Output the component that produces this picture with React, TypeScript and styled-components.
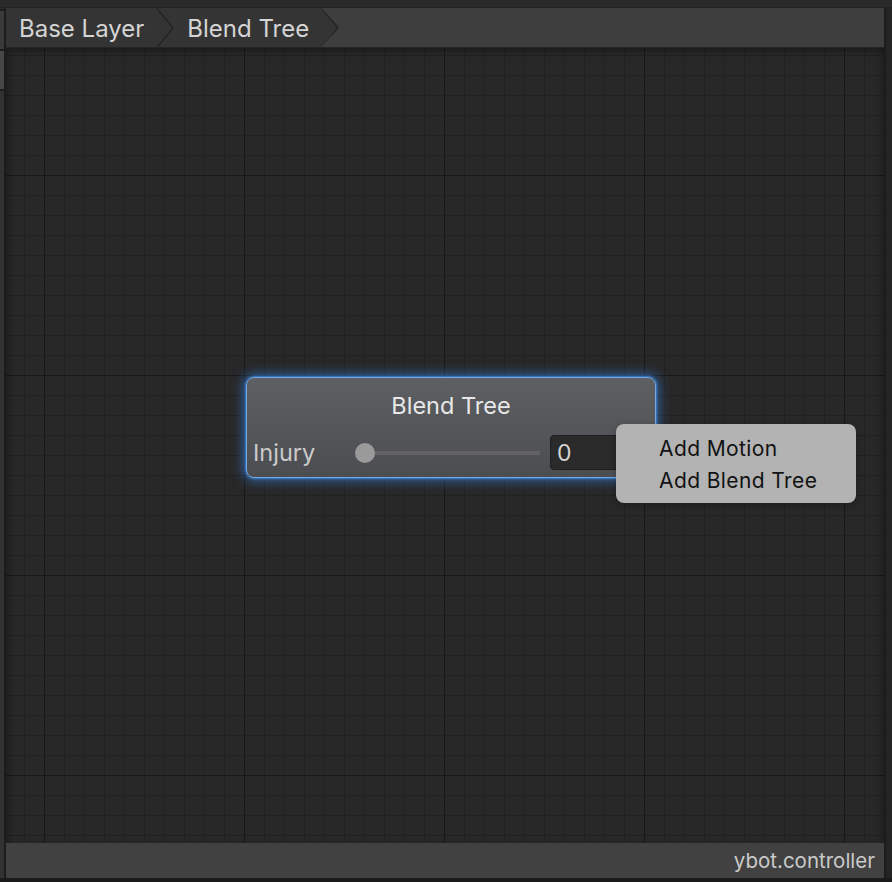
import React, { FC } from 'react';
import styled, { createGlobalStyle } from 'styled-components';

const GlobalStyle = createGlobalStyle`
    html, body {
        margin: 0;
        padding: 0;
        background: #1e1e1e;
    }
    * {
        box-sizing: border-box;
    }
`;

const Window = styled.div`
    width: 892px;
    height: 882px;
    background: #1e1e1e;
    display: flex;
    flex-direction: column;
    font-family: Inter, 'Noto Sans', sans-serif;
    overflow: hidden;
`;

const TopStrip = styled.div`
    height: 8px;
    background: #2a2a2a;
    border-bottom: 1px solid #222;
    flex: none;
`;

const Body = styled.div`
    flex: 1;
    display: flex;
    min-height: 0;
`;

const LeftEdge = styled.div`
    width: 6px;
    flex: none;
    display: flex;
    flex-direction: column;
    border-right: 2px solid #1c1c1c;
`;

const EdgeBlock = styled.div<{ h: number; shade: string }>`
    height: ${({ h }) => h}px;
    background: ${({ shade }) => shade};
    border-bottom: 2px solid #1e1e1e;
    flex: none;
`;

const EdgeRest = styled.div`
    flex: 1;
    background: #323232;
`;

const RightEdge = styled.div`
    width: 8px;
    flex: none;
    background: #242424;
    border-left: 2px solid #1c1c1c;
`;

const Main = styled.div`
    flex: 1;
    display: flex;
    flex-direction: column;
    min-width: 0;
`;

const Breadcrumbs = styled.div`
    height: 40px;
    flex: none;
    display: flex;
    background: #3e3e3e;
    border-bottom: 1px solid #262626;
`;

const Crumb = styled.div<{ last?: boolean }>`
    position: relative;
    height: 100%;
    display: flex;
    align-items: center;
    padding: 2px 30px 0 13px;
    background: #343434;
    color: #d4d4d4;
    font-size: 24px;
    clip-path: ${({ last }) =>
        last ? 'polygon(0 0, calc(100% - 18px) 0, 100% 50%, calc(100% - 18px) 100%, 0 100%)' : 'none'};
`;

const CrumbArrow = styled.svg`
    position: absolute;
    right: 0;
    top: 0;
`;

const Canvas = styled.div`
    position: relative;
    flex: 1;
    background-color: #282828;
    background-image:
        linear-gradient(to right, #181818 1px, transparent 1px),
        linear-gradient(to bottom, #181818 1px, transparent 1px),
        linear-gradient(to right, #212121 1px, transparent 1px),
        linear-gradient(to bottom, #212121 1px, transparent 1px);
    background-size: 200px 200px, 200px 200px, 20px 20px, 20px 20px;
    background-position: 38px 127px, 38px 127px, 38px 127px, 38px 127px;
    box-shadow: inset 6px 6px 8px -4px rgba(0, 0, 0, 0.35), inset -6px 0 8px -4px rgba(0, 0, 0, 0.3);
`;

const Node = styled.div`
    position: absolute;
    left: 240px;
    top: 329px;
    width: 410px;
    height: 101px;
    border-radius: 8px;
    background: linear-gradient(to bottom, #5d5f63, #4b4d51);
    border: 1.5px solid #74a9e2;
    box-shadow: 0 0 2px 1px #3b7fcb, 0 0 12px 3px rgba(52, 120, 205, 0.7);
    display: flex;
    flex-direction: column;
`;

const NodeTitle = styled.div`
    height: 52px;
    display: flex;
    align-items: center;
    justify-content: center;
    color: #e8e8e8;
    font-size: 23.5px;
    padding-top: 2px;
`;

const ParamRow = styled.div`
    display: flex;
    align-items: center;
    padding: 3px 0 0 6px;
    height: 42px;
`;

const ParamLabel = styled.span`
    width: 102px;
    color: #cbcbcb;
    font-size: 23.5px;
`;

const Slider = styled.div`
    position: relative;
    width: 186px;
    height: 20px;
    display: flex;
    align-items: center;
`;

const SliderTrack = styled.div`
    margin-left: 9px;
    width: 176px;
    height: 4px;
    background: #626262;
`;

const SliderThumb = styled.div`
    position: absolute;
    left: 0;
    top: 0;
    width: 20px;
    height: 20px;
    border-radius: 50%;
    background: #9a9a9a;
`;

const NumberField = styled.div`
    margin-left: 9px;
    width: 90px;
    height: 35px;
    border-radius: 4px;
    background: #2a2a2a;
    border: 1px solid #1f1f1f;
    color: #d4d4d4;
    font-size: 23px;
    display: flex;
    align-items: center;
    padding-left: 6px;
`;

const ContextMenu = styled.div`
    position: absolute;
    left: 610px;
    top: 376px;
    width: 240px;
    height: 79px;
    border-radius: 8px;
    background: #b3b3b3;
    box-shadow: 0 2px 6px rgba(0, 0, 0, 0.25);
    padding: 8px 0 0 43px;
    display: flex;
    flex-direction: column;
`;

const MenuItem = styled.div`
    height: 32px;
    display: flex;
    align-items: center;
    color: #121212;
    font-size: 21px;
    letter-spacing: 0.4px;
`;

const Footer = styled.div`
    height: 35px;
    flex: none;
    background: #414141;
    display: flex;
    align-items: center;
    justify-content: flex-end;
    padding-right: 9px;
    color: #cacaca;
    font-size: 20.5px;
`;

const BottomStrip = styled.div`
    height: 4px;
    flex: none;
    background: #1a1a1a;
`;

const Arrow: FC = () => (
    <CrumbArrow width="18" height="40" viewBox="0 0 18 40">
        <path d="M0.5 0 L17 20 L0.5 40" fill="none" stroke="#252525" strokeWidth="1.5" />
    </CrumbArrow>
);

const App: FC = () => {
    return (
        <Window>
            <GlobalStyle />
            <TopStrip />
            <Body>
                <LeftEdge>
                    <EdgeBlock h={3} shade="#2e2e2e" />
                    <EdgeBlock h={40} shade="#3a3a3a" />
                    <EdgeBlock h={40} shade="#474747" />
                    <EdgeRest />
                </LeftEdge>
                <Main>
                    <Breadcrumbs>
                        <Crumb>
                            Base Layer
                            <Arrow />
                        </Crumb>
                        <Crumb last>
                            Blend Tree
                            <Arrow />
                        </Crumb>
                    </Breadcrumbs>
                    <Canvas>
                        <Node>
                            <NodeTitle>Blend Tree</NodeTitle>
                            <ParamRow>
                                <ParamLabel>Injury</ParamLabel>
                                <Slider>
                                    <SliderTrack />
                                    <SliderThumb />
                                </Slider>
                                <NumberField>0</NumberField>
                            </ParamRow>
                        </Node>
                        <ContextMenu>
                            <MenuItem>Add Motion</MenuItem>
                            <MenuItem>Add Blend Tree</MenuItem>
                        </ContextMenu>
                    </Canvas>
                    <Footer>ybot.controller</Footer>
                </Main>
                <RightEdge />
            </Body>
            <BottomStrip />
        </Window>
    );
};

export default App;
